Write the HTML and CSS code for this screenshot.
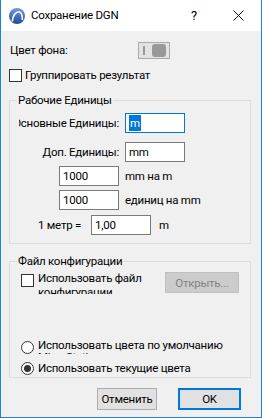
FILE: index.html
```html
<!DOCTYPE html>
<html lang="ru">
<head>
    <meta charset="UTF-8">
    <title>Сохранение DGN</title>
    <link rel="stylesheet" href="styles.css">
</head>
<body>
    <div class="window">
        <div class="titlebar">
            <svg class="logo" width="16" height="16" viewBox="0 0 16 16">
                <defs>
                    <linearGradient id="lg" x1="0" y1="0" x2="0" y2="1">
                        <stop offset="0" stop-color="#6f9be0"/>
                        <stop offset="1" stop-color="#1d4c9e"/>
                    </linearGradient>
                </defs>
                <circle cx="8" cy="8" r="8" fill="url(#lg)"/>
                <path d="M3.2 13.5 Q4.5 4.2 10 3.8 Q13.6 4.6 13.4 12" stroke="#fff" stroke-width="1.6" fill="none"/>
            </svg>
            <span class="title">Сохранение DGN</span>
            <span class="help">?</span>
            <svg class="close" width="11" height="11" viewBox="0 0 11 11">
                <path d="M0.5 0.5 L10.5 10.5 M10.5 0.5 L0.5 10.5" stroke="#111" stroke-width="1"/>
            </svg>
        </div>

        <div class="content">
            <div class="bg-row">
                <span class="bg-label">Цвет фона:</span>
                <span class="toggle"><i class="toggle-bar"></i><i class="toggle-knob"></i></span>
            </div>

            <div class="check-row">
                <span class="checkbox"></span>
                <span>Группировать результат</span>
            </div>

            <fieldset class="group units">
                <legend>Рабочие Единицы</legend>
                <div class="unit-row first">
                    <span class="unit-label"><span>Основные Единицы:</span></span>
                    <div class="field focused"><span class="sel">m</span></div>
                </div>
                <div class="unit-row second">
                    <span class="unit-label"><span>Доп. Единицы:</span></span>
                    <div class="field">mm</div>
                </div>
                <div class="unit-row ratio">
                    <div class="field">1000</div>
                    <span>mm на m</span>
                </div>
                <div class="unit-row ratio">
                    <div class="field">1000</div>
                    <span>единиц на mm</span>
                </div>
                <div class="unit-row meter">
                    <span class="meter-label">1 метр =</span>
                    <div class="field">1,00</div>
                    <span class="meter-unit">m</span>
                </div>
            </fieldset>

            <fieldset class="group config">
                <legend>Файл конфигурации</legend>
                <div class="config-row">
                    <span class="checkbox"></span>
                    <span class="wrap-text file-text">Использовать файл конфигурации</span>
                    <button class="btn disabled">Открыть...</button>
                </div>
                <div class="radio-row first-radio">
                    <span class="radio"></span>
                    <span class="wrap-text radio-text">Использовать цвета по умолчанию MicroStation</span>
                </div>
                <div class="radio-row second-radio">
                    <span class="radio checked"></span>
                    <span>Использовать текущие цвета</span>
                </div>
            </fieldset>

            <div class="footer">
                <button class="btn">Отменить</button>
                <button class="btn default">OK</button>
            </div>
        </div>
    </div>
</body>
</html>
```

FILE: styles.css
```css
body {
    margin: 0;
    font-family: Roboto, "Noto Sans", sans-serif;
    font-size: 11.5px;
    letter-spacing: -0.25px;
    line-height: 15px;
    color: #000;
}

.window {
    width: 262px;
    height: 418px;
    box-sizing: border-box;
    border: 1px solid #1883d7;
    border-top: none;
    background-color: #f0f0f0;
    overflow: hidden;
}

.titlebar {
    height: 31px;
    background-color: white;
    display: flex;
    align-items: center;
    padding-left: 8px;
}

.logo {
    margin-right: 6px;
}

.title {
    flex: 1;
}

.help {
    font-size: 13px;
    margin-right: 36px;
}

.close {
    margin-right: 17px;
}

.content {
    padding: 0 10px 0 8px;
}

.bg-row {
    display: flex;
    align-items: center;
    height: 17px;
    margin-top: 11px;
}

.bg-label {
    width: 129px;
    padding-left: 1px;
    box-sizing: border-box;
}

.toggle {
    position: relative;
    width: 32px;
    height: 17px;
    box-sizing: border-box;
    border: 1px solid #a9a9a9;
    background-color: #e3e3e3;
}

.toggle-bar {
    position: absolute;
    left: 4px;
    top: 3px;
    width: 2px;
    height: 9px;
    background-color: #9a9a9a;
}

.toggle-knob {
    position: absolute;
    left: 13px;
    top: 1px;
    width: 14px;
    height: 13px;
    border-radius: 3px;
    background-color: #999;
}

.check-row {
    display: flex;
    align-items: center;
    gap: 3px;
    margin-top: 10px;
    height: 13px;
}

.checkbox {
    width: 13px;
    height: 13px;
    box-sizing: border-box;
    border: 1px solid #333;
    background-color: white;
    flex-shrink: 0;
}

.group {
    margin: 10px 0 0;
    padding: 0 0 8px;
    border: 1px solid #dcdcdc;
    min-width: 0;
}

.group legend {
    margin-left: 7px;
    padding: 0 1px;
    line-height: 16px;
}

.unit-row {
    display: flex;
    align-items: center;
    height: 20px;
    gap: 6px;
}

.unit-row.first {
    margin-top: 5px;
    padding-left: 9px;
}

.unit-row.second {
    margin-top: 9px;
    padding-left: 9px;
}

.unit-row.ratio {
    margin-top: 4px;
    padding-left: 49px;
}

.unit-row.meter {
    margin-top: 5px;
    padding-left: 28px;
    gap: 0;
}

.unit-label {
    width: 100px;
    display: flex;
    justify-content: flex-end;
    overflow: hidden;
    white-space: nowrap;
}

.field {
    width: 60px;
    height: 20px;
    box-sizing: border-box;
    border: 1px solid #7a7a7a;
    background-color: white;
    padding-left: 3px;
    line-height: 18px;
}

.field.focused {
    border-color: #0078d7;
}

.sel {
    background-color: #0078d7;
    color: white;
    padding: 1px 1px;
}

.meter-label {
    width: 53px;
}

.meter-unit {
    margin-left: 8px;
}

.group.config {
    margin-top: 9px;
    padding-bottom: 2px;
}

.config-row {
    display: flex;
    align-items: flex-start;
    margin-top: 1px;
    padding-left: 11px;
    height: 24px;
}

.config-row .checkbox {
    margin-top: 4px;
}

.wrap-text {
    overflow: hidden;
    line-height: 14px;
}

.file-text {
    width: 122px;
    height: 23px;
    margin-left: 4px;
    padding-top: 1px;
}

.btn {
    font-family: Roboto, "Noto Sans", sans-serif;
    font-size: 11.5px;
    letter-spacing: -0.25px;
    color: #000;
    height: 22px;
    padding: 0;
    border: 1px solid #adadad;
    background-color: #e1e1e1;
}

.btn.disabled {
    width: 74px;
    height: 21px;
    margin-top: 2px;
    margin-left: 5px;
    color: #838383;
    background-color: #cccccc;
    border-color: #bfbfbf;
}

.radio-row {
    display: flex;
    align-items: center;
    gap: 4px;
    padding-left: 11px;
    height: 13px;
}

.radio-row.first-radio {
    margin-top: 45px;
    align-items: flex-start;
    height: 15px;
}

.radio-row.first-radio .radio {
    margin-top: 2px;
}

.radio-row.second-radio {
    margin-top: 8px;
}

.radio-text {
    width: 205px;
    height: 15px;
    line-height: 12px;
}

.radio {
    position: relative;
    width: 13px;
    height: 13px;
    box-sizing: border-box;
    border: 1px solid #333;
    border-radius: 50%;
    background-color: white;
    flex-shrink: 0;
}

.radio.checked::after {
    content: "";
    position: absolute;
    left: 2px;
    top: 2px;
    width: 7px;
    height: 7px;
    border-radius: 50%;
    background-color: #333;
}

.footer {
    display: flex;
    justify-content: flex-end;
    gap: 21px;
    margin-top: 10px;
    padding-right: 10px;
}

.footer .btn {
    width: 60px;
}

.btn.default {
    width: 63px;
    border: 2px solid #0078d7;
}
```
